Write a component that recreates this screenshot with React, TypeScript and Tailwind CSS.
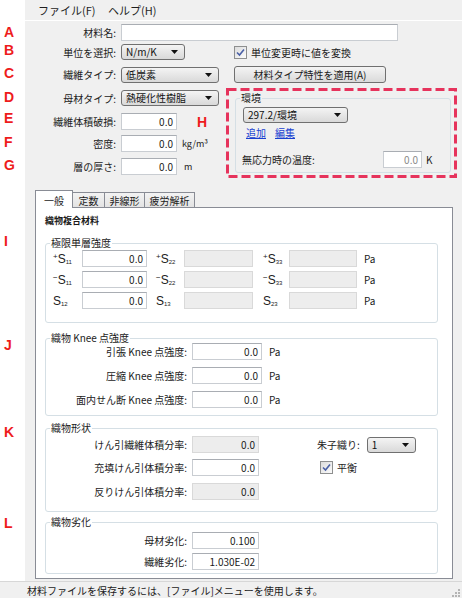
import React from "react";

type Cls = { className?: string };

function TextBox({
  value = "",
  disabled = false,
  dim = false,
  className = "",
}: { value?: string; disabled?: boolean; dim?: boolean } & Cls) {
  return (
    <div
      className={`flex h-[17px] shrink-0 items-center justify-end border px-[3px] text-[10px] leading-none ${
        disabled ? "border-[#d9d9d9] bg-[#ededed]" : "border-[#c9cdd2] border-t-[#a9adb3] bg-white"
      } ${dim ? "text-[#8a8a8a]" : "text-[#1b1b1b]"} ${className}`}
    >
      {value}
    </div>
  );
}

function Combo({ value, className = "" }: { value: string } & Cls) {
  return (
    <div
      className={`flex h-[16px] shrink-0 items-center justify-between rounded-[3px] border border-[#707070] bg-linear-to-b from-[#f4f4f4] to-[#d9d9d9] pl-[4px] pr-[6px] text-[10px] leading-none text-[#111] ${className}`}
    >
      <span>{value}</span>
      <svg width="7" height="4" viewBox="0 0 7 4">
        <path d="M0 0h7L3.5 4z" fill="#111" />
      </svg>
    </div>
  );
}

function CheckBox({ className = "" }: Cls) {
  return (
    <span
      className={`flex h-[13px] w-[13px] shrink-0 items-center justify-center border border-[#8e8f8f] bg-linear-to-br from-[#dcdcdc] to-[#fbfbfb] ${className}`}
    >
      <svg width="9" height="9" viewBox="0 0 9 9">
        <path d="M1 4.5L3.5 7L8 1.5" stroke="#4a60a6" strokeWidth="1.6" fill="none" />
      </svg>
    </span>
  );
}

function Group({ title, className = "", children }: { title: string; children: React.ReactNode } & Cls) {
  return (
    <fieldset className={`rounded-[3px] border border-[#d5dfe5] ${className}`}>
      <legend className="ml-[4px] px-[1px] text-[10px] leading-[10px] text-[#1b1b1b]">{title}</legend>
      {children}
    </fieldset>
  );
}

function SLabel({ sign, sub, className = "" }: { sign?: string; sub: string } & Cls) {
  return (
    <span className={`shrink-0 font-['Liberation_Sans',sans-serif] text-[12px] leading-none text-[#222] ${className}`}>
      <sup className="text-[8px]">{sign}</sup>S<sub className="text-[6px]">{sub}</sub>
    </span>
  );
}

function Letter({ children, className = "" }: { children: string } & Cls) {
  return <div className={`h-[14px] ${className}`}>{children}</div>;
}

export default function App() {
  return (
    <div className="flex h-[598px] w-[462px] flex-col overflow-hidden font-['Noto_Sans_CJK_JP',sans-serif] text-[10px] text-[#1b1b1b]">
      <div className="flex h-[581px]">
        {/* ── annotation letters ── */}
        <div className="flex w-[25px] shrink-0 flex-col bg-white pl-[4px] font-['Liberation_Sans',sans-serif] text-[14px] font-bold leading-[14px] text-[#ee1c1c]">
          <Letter className="mt-[25px]">A</Letter>
          <Letter className="mt-[4px]">B</Letter>
          <Letter className="mt-[9px]">C</Letter>
          <Letter className="mt-[10px]">D</Letter>
          <Letter className="mt-[7px]">E</Letter>
          <Letter className="mt-[10px]">F</Letter>
          <Letter className="mt-[9px]">G</Letter>
          <Letter className="mt-[62px]">I</Letter>
          <Letter className="mt-[90px]">J</Letter>
          <Letter className="mt-[73px]">K</Letter>
          <Letter className="mt-[77px]">L</Letter>
        </div>

        <div className="flex flex-1 flex-col bg-[#f0f0f0]">
          {/* ── Menu ── */}
          <div className="flex h-[21px] items-center border-b border-white pl-[13px] text-[11px] text-[#1e1e1e]">
            <span className="w-[70px]">ファイル(F)</span>
            <span>ヘルプ(H)</span>
          </div>

          {/* ── Top form ── */}
          <div className="mt-[3px] flex h-[17px] items-center">
            <span className="w-[91px] text-right">材料名:</span>
            <TextBox className="ml-[5px] w-[277px]" />
          </div>
          <div className="mt-[3px] flex h-[16px] items-center">
            <span className="w-[91px] text-right">単位を選択:</span>
            <Combo value="N/m/K" className="ml-[5px] w-[64px]" />
            <CheckBox className="ml-[49px]" />
            <span className="ml-[4px]">単位変更時に値を変換</span>
          </div>
          <div className="mt-[6px] flex h-[17px] items-center">
            <span className="w-[91px] text-right">繊維タイプ:</span>
            <Combo value="低炭素" className="ml-[5px] w-[98px]" />
            <button className="ml-[15px] flex h-[17px] w-[152px] items-center justify-center rounded-[3px] border border-[#707070] bg-linear-to-b from-[#f4f4f4] to-[#dadada] text-[10px] leading-none">
              材料タイプ特性を適用(A)
            </button>
          </div>

          <div className="mt-[5px] flex">
            <div className="flex w-[201px] flex-col">
              <div className="mt-[2px] flex h-[16px] items-center">
                <span className="w-[91px] text-right">母材タイプ:</span>
                <Combo value="熱硬化性樹脂" className="ml-[5px] w-[98px]" />
              </div>
              <div className="mt-[7px] flex h-[17px] items-center">
                <span className="w-[91px] text-right">繊維体積破損:</span>
                <TextBox value="0.0" className="ml-[5px] w-[56px]" />
                <span className="ml-[20px] font-['Liberation_Sans',sans-serif] text-[14px] font-bold leading-[14px] text-[#ee1c1c]">
                  H
                </span>
              </div>
              <div className="mt-[5px] flex h-[17px] items-center">
                <span className="w-[91px] text-right">密度:</span>
                <TextBox value="0.0" className="ml-[5px] w-[56px]" />
                <span className="ml-[5px] text-[9px]">kg/m³</span>
              </div>
              <div className="mt-[6px] flex h-[17px] items-center">
                <span className="w-[91px] text-right">層の厚さ:</span>
                <TextBox value="0.0" className="ml-[5px] w-[56px]" />
                <span className="ml-[7px] text-[9px]">m</span>
              </div>
            </div>

            {/* ── H: environment (highlighted) ── */}
            <div className="relative h-[90px] w-[231px] pl-[9px] pt-[5px]">
              <Group title="環境" className="w-[216px] pb-[4px]">
                <Combo value="297.2/環境" className="ml-[7px] mt-[4px] w-[105px]" />
                <div className="ml-[10px] mt-[3px] flex h-[12px] items-center text-[#1a3fd0] underline">
                  <span>追加</span>
                  <span className="ml-[9px]">編集</span>
                </div>
                <div className="mt-[13px] flex h-[17px] items-center">
                  <span className="ml-[6px] w-[141px]">無応力時の温度:</span>
                  <TextBox value="0.0" dim className="w-[39px]" />
                  <span className="ml-[4px]">K</span>
                </div>
              </Group>
              <svg className="pointer-events-none absolute inset-0" width="231" height="90">
                <rect
                  x="1.5"
                  y="1.5"
                  width="228"
                  height="87"
                  fill="none"
                  stroke="#e6335c"
                  strokeWidth="3"
                  strokeDasharray="9 4"
                />
              </svg>
            </div>
          </div>

          {/* ── Tabs ── */}
          <div className="mt-[12px] flex h-[17px] items-end pl-[10px]">
            <div className="relative z-10 -mb-px flex h-[18px] w-[38px] items-start justify-center border border-b-0 border-[#898c95] bg-white pt-[2px]">
              一般
            </div>
            <div className="flex h-[15px] w-[32px] items-center justify-center border-r border-t border-[#898c95] bg-linear-to-b from-[#f3f3f3] to-[#e3e3e3]">
              定数
            </div>
            <div className="flex h-[15px] w-[40px] items-center justify-center border-r border-t border-[#898c95] bg-linear-to-b from-[#f3f3f3] to-[#e3e3e3]">
              非線形
            </div>
            <div className="flex h-[15px] w-[50px] items-center justify-center border-r border-t border-[#898c95] bg-linear-to-b from-[#f3f3f3] to-[#e3e3e3]">
              疲労解析
            </div>
          </div>

          {/* ── Tab panel ── */}
          <div className="ml-[10px] flex w-[418px] flex-col border border-[#898c95] bg-white pb-[4px] pl-[9px] pr-[14px]">
            <div className="mt-[6px] h-[14px] text-[9px] font-bold leading-[14px]">織物複合材料</div>

            {/* I */}
            <Group title="極限単層強度" className="mt-[10px] pb-[13px]">
              {[
                ["+", "11", "+", "22", "+", "33"],
                ["−", "11", "−", "22", "−", "33"],
                ["", "12", "", "13", "", "23"],
              ].map((r, i) => (
                <div key={i} className={`flex h-[17px] items-center ${i === 0 ? "mt-[2px]" : "mt-[4px]"}`}>
                  <SLabel sign={r[0]} sub={r[1]} className="ml-[7px] w-[29px]" />
                  <TextBox value="0.0" className="w-[65px]" />
                  <SLabel sign={r[2]} sub={r[3]} className="ml-[9px] w-[28px]" />
                  <TextBox disabled className="w-[69px]" />
                  <SLabel sign={r[4]} sub={r[5]} className="ml-[10px] w-[26px]" />
                  <TextBox disabled className="w-[68px]" />
                  <span className="ml-[7px]">Pa</span>
                </div>
              ))}
            </Group>

            {/* J */}
            <Group title="織物 Knee 点強度" className="mt-[10px] pb-[7px]">
              {["引張 Knee 点強度:", "圧縮 Knee 点強度:", "面内せん断 Knee 点強度:"].map((l, i) => (
                <div key={l} className={`flex h-[17px] items-center ${i === 0 ? "" : "mt-[7px]"}`}>
                  <span className="w-[141px] text-right">{l}</span>
                  <TextBox value="0.0" className="ml-[5px] w-[70px]" />
                  <span className="ml-[7px]">Pa</span>
                </div>
              ))}
            </Group>

            {/* K */}
            <Group title="織物形状" className="mt-[7px] pb-[11px]">
              <div className="mt-[3px] flex h-[17px] items-center">
                <span className="w-[141px] text-right">けん引繊維体積分率:</span>
                <TextBox value="0.0" disabled className="ml-[5px] w-[67px]" />
                <span className="ml-[58px]">朱子織り:</span>
                <Combo value="1" className="ml-[7px] w-[49px]" />
              </div>
              <div className="mt-[6px] flex h-[17px] items-center">
                <span className="w-[141px] text-right">充填けん引体積分率:</span>
                <TextBox value="0.0" className="ml-[5px] w-[67px]" />
                <CheckBox className="ml-[61px]" />
                <span className="ml-[4px]">平衡</span>
              </div>
              <div className="mt-[7px] flex h-[17px] items-center">
                <span className="w-[141px] text-right">反りけん引体積分率:</span>
                <TextBox value="0.0" disabled className="ml-[5px] w-[67px]" />
              </div>
            </Group>

            {/* L */}
            <Group title="織物劣化" className="mt-[5px] pb-[3px]">
              <div className="mt-[5px] flex h-[17px] items-center">
                <span className="w-[141px] text-right">母材劣化:</span>
                <TextBox value="0.100" className="ml-[5px] w-[67px]" />
              </div>
              <div className="mt-[4px] flex h-[17px] items-center">
                <span className="w-[141px] text-right">繊維劣化:</span>
                <TextBox value="1.030E-02" className="ml-[5px] w-[67px]" />
              </div>
            </Group>
          </div>
        </div>
      </div>

      {/* ── Status bar ── */}
      <div className="flex h-[17px] items-center justify-between border-t border-[#d7d7d7] bg-[#f0f0f0] pl-[27px] pr-[2px]">
        <span>材料ファイルを保存するには、[ファイル]メニューを使用します。</span>
        <svg width="10" height="10" viewBox="0 0 10 10" className="self-end">
          {[
            [8, 0],
            [5, 3],
            [8, 3],
            [2, 6],
            [5, 6],
            [8, 6],
          ].map(([x, y]) => (
            <rect key={`${x}-${y}`} x={x} y={y + 1} width="2" height="2" fill="#b4b4b4" />
          ))}
        </svg>
      </div>
    </div>
  );
}
